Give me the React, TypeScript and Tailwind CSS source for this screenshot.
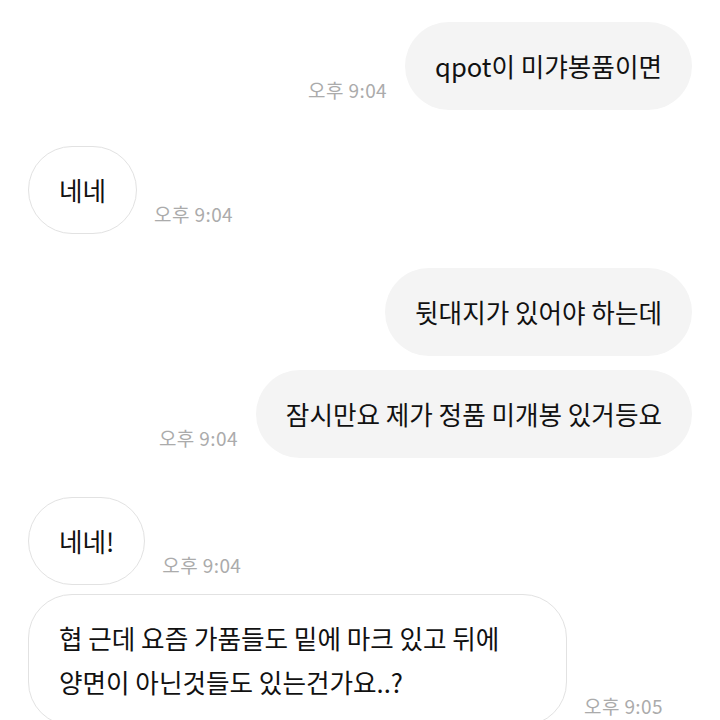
import React from 'react';

type Msg = {
  lines: string[];
  mine: boolean;
  time?: string;
  gap: string;
  width?: string;
};

const messages: Msg[] = [
  { lines: ['qpot이 미갸봉품이면'], mine: true, time: '오후 9:04', gap: 'mt-[22px]' },
  { lines: ['네네'], mine: false, time: '오후 9:04', gap: 'mt-[36px]' },
  { lines: ['뒷대지가 있어야 하는데'], mine: true, gap: 'mt-[34px]' },
  { lines: ['잠시만요 제가 정품 미개봉 있거등요'], mine: true, time: '오후 9:04', gap: 'mt-[14px]' },
  { lines: ['네네!'], mine: false, time: '오후 9:04', gap: 'mt-[39px]' },
  {
    lines: ['협 근데 요즘 가품들도 밑에 마크 있고 뒤에', '양면이 아닌것들도 있는건가요..?'],
    mine: false,
    time: '오후 9:05',
    gap: 'mt-[9px]',
    width: 'w-[539px]',
  },
];

const Time: React.FC<{ value?: string }> = ({ value }) =>
  value ? (
    <span className="shrink-0 pb-[9px] text-[19px] leading-[22px] tracking-[0.4px] text-[#ababab]">{value}</span>
  ) : null;

const Bubble: React.FC<{ msg: Msg }> = ({ msg }) => (
  <div
    className={
      (msg.mine
        ? 'rounded-[44px] bg-[#f4f4f4] px-[30px] py-[22px] text-[25.6px] leading-[44px] text-[#111] '
        : 'rounded-[44px] border border-[#e2e2e2] bg-white px-[30px] py-[21px] text-[25.6px] leading-[44px] text-[#111] ') +
      (msg.width ?? '')
    }
  >
    {msg.lines.map((l, i) => (
      <div key={i} className="whitespace-nowrap">
        {l}
      </div>
    ))}
  </div>
);

export default function App() {
  return (
    <div
      className="flex h-[720px] w-[720px] flex-col overflow-hidden bg-white px-[28px]"
      style={{ fontFamily: '"Noto Sans CJK KR", "Noto Sans", sans-serif' }}
    >
      {messages.map((m, i) =>
        m.mine ? (
          <div key={i} className={`flex shrink-0 items-end justify-end gap-[18px] ${m.gap}`}>
            <Time value={m.time} />
            <Bubble msg={m} />
          </div>
        ) : (
          <div key={i} className={`flex shrink-0 items-end gap-[17px] ${m.gap}`}>
            <Bubble msg={m} />
            <Time value={m.time} />
          </div>
        )
      )}
    </div>
  );
}
